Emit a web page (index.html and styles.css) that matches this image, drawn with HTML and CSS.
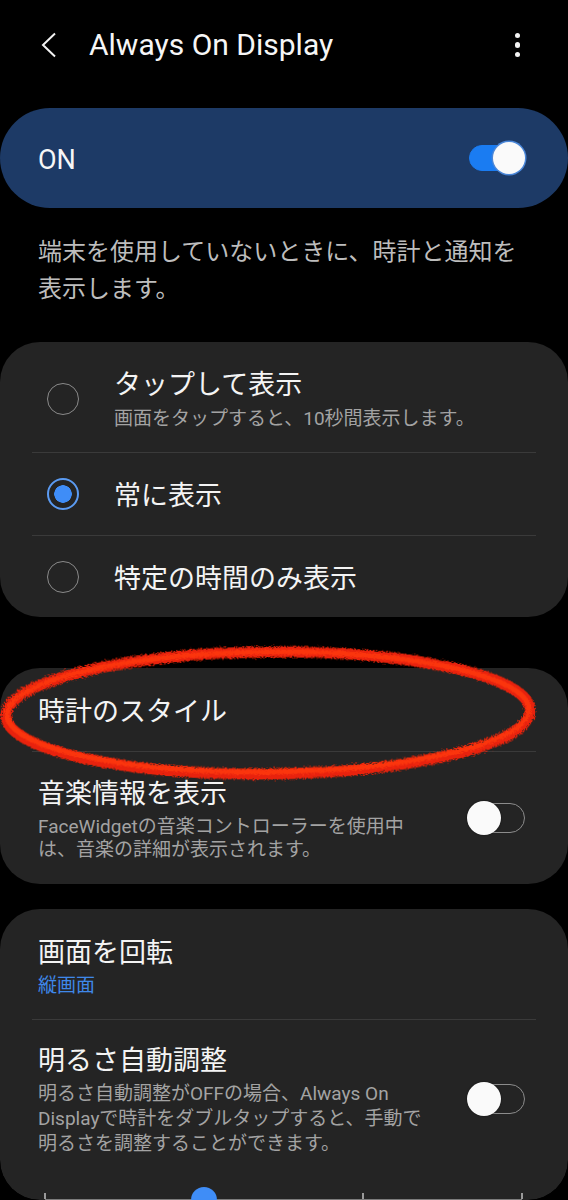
FILE: index.html
```html
<!DOCTYPE html>
<html>
<head>
  <meta charset="utf-8">
  <title>Always On Display</title>
  <link rel="stylesheet" href="styles.css">
</head>
<body>
  <div class="screen">
    <header class="appbar">
      <svg class="back" width="16" height="26" viewBox="0 0 16 26">
        <polyline points="14,1.5 2,13 14,24.5" fill="none" stroke="#f2f2f2" stroke-width="2"/>
      </svg>
      <h1 class="title">Always On Display</h1>
      <div class="more"><span></span><span></span><span></span></div>
    </header>

    <div class="master">
      <span class="master-label">ON</span>
      <span class="switch on"><span class="knob"></span></span>
    </div>

    <p class="intro">端末を使用していないときに、時計と通知を表示します。</p>

    <section class="card">
      <div class="option first">
        <span class="radio"></span>
        <div class="text">
          <div class="label">タップして表示</div>
          <div class="summary">画面をタップすると、10秒間表示します。</div>
        </div>
      </div>
      <div class="divider"></div>
      <div class="option">
        <span class="radio checked"></span>
        <div class="label">常に表示</div>
      </div>
      <div class="divider"></div>
      <div class="option last">
        <span class="radio"></span>
        <div class="label">特定の時間のみ表示</div>
      </div>
    </section>

    <section class="card second">
      <div class="row plain">
        <div class="label">時計のスタイル</div>
      </div>
      <div class="divider"></div>
      <div class="row music">
        <div class="text">
          <div class="label">音楽情報を表示</div>
          <div class="summary tight">FaceWidgetの音楽コントローラーを使用中<br>は、音楽の詳細が表示されます。</div>
        </div>
        <span class="switch"><span class="knob"></span></span>
      </div>
    </section>

    <section class="card third">
      <div class="row rotate">
        <div class="text">
          <div class="label">画面を回転</div>
          <div class="value">縦画面</div>
        </div>
      </div>
      <div class="divider"></div>
      <div class="row bright">
        <div class="text">
          <div class="label">明るさ自動調整</div>
          <div class="summary loose">明るさ自動調整がOFFの場合、Always On<br>Displayで時計をダブルタップすると、手動で<br>明るさを調整することができます。</div>
        </div>
        <span class="switch"><span class="knob"></span></span>
      </div>
      <div class="slider">
        <span class="tick t0"></span>
        <span class="tick t1"></span>
        <span class="tick t2"></span>
        <span class="tick t3"></span>
        <span class="thumb"></span>
      </div>
    </section>

    <!-- hand drawn red mark over the clock style row -->
    <svg class="mark" width="568" height="150" viewBox="0 0 568 150">
      <defs>
        <filter id="rough" x="-5%" y="-20%" width="110%" height="140%">
          <feTurbulence type="fractalNoise" baseFrequency="0.9" numOctaves="2" seed="3" result="noise"/>
          <feDisplacementMap in="SourceGraphic" in2="noise" scale="6"/>
        </filter>
      </defs>
      <g filter="url(#rough)" fill="none" transform="rotate(-0.6 268 73)">
        <ellipse cx="268" cy="73" rx="262" ry="61" stroke="#e82208" stroke-width="11"/>
        <ellipse cx="268" cy="72" rx="261" ry="60" stroke="#ff3a12" stroke-width="5" opacity="0.8"/>
      </g>
    </svg>
  </div>
</body>
</html>
```

FILE: styles.css
```css
body {
  margin: 0;
  background-color: #000;
  font-family: Roboto, "Noto Sans CJK JP", sans-serif;
  color: #f4f4f4;
}

.screen {
  position: relative;
  width: 568px;
  height: 1200px;
  overflow: hidden;
  border-radius: 0 0 40px 40px;
}

/* top bar */
.appbar {
  height: 90px;
  display: flex;
  align-items: center;
  padding-left: 41px;
}

.appbar .back {
  display: block;
}

.appbar .title {
  margin: 0 0 0 32px;
  font-size: 30px;
  font-weight: 400;
  line-height: 36px;
  color: #f6f6f6;
}

.appbar .more {
  margin-left: auto;
  margin-right: 48px;
  display: flex;
  flex-direction: column;
  gap: 4px;
}

.appbar .more span {
  width: 5.5px;
  height: 5.5px;
  border-radius: 50%;
  background-color: #f2f2f2;
}

/* master switch */
.master {
  margin-top: 18px;
  height: 100px;
  border-radius: 50px;
  background-color: #1d3a66;
  display: flex;
  align-items: center;
  justify-content: space-between;
  padding: 0 43px 0 38px;
}

.master-label {
  font-size: 27px;
  line-height: 32px;
  padding-top: 4px;
  color: #f6f6f6;
}

.intro {
  margin: 26px 0 0;
  padding: 0 38px;
  font-size: 24px;
  line-height: 37px;
  color: #bdbdbd;
}

/* switches */
.switch {
  position: relative;
  flex: none;
  width: 56px;
  height: 30px;
  box-sizing: border-box;
  border: 1.5px solid #8c8c8c;
  border-radius: 15px;
}

.switch .knob {
  position: absolute;
  top: 50%;
  left: -3px;
  width: 34px;
  height: 34px;
  margin-top: -17px;
  border-radius: 50%;
  background-color: #fafafa;
  box-shadow: 0 0 2px rgba(0, 0, 0, 0.6);
}

.switch.on {
  height: 26px;
  border-color: #1a7cf2;
  background-color: #1a7cf2;
}

.switch.on .knob {
  left: auto;
  right: -1px;
  width: 32px;
  height: 32px;
  margin-top: -16px;
  box-shadow: 0 0 0 1.5px #4a86d8;
}

/* cards */
.card {
  margin-top: 34px;
  background-color: #242424;
  border-radius: 40px;
}

.card.second {
  margin-top: 51px;
}

.card.third {
  margin-top: 25px;
}

.divider {
  height: 1px;
  margin: 0 32px 0 32px;
  background-color: #3a3a3a;
}

.label {
  font-size: 27px;
  line-height: 32px;
  padding-top: 4px;
  color: #f4f4f4;
}

.summary {
  margin-top: 4px;
  font-size: 19px;
  line-height: 28px;
  color: #a3a3a3;
}

.summary.tight {
  margin-top: 5px;
  line-height: 23px;
}

.summary.loose {
  margin-top: 4px;
  line-height: 25px;
}

.value {
  margin-top: 3px;
  font-size: 19px;
  line-height: 28px;
  color: #3f88ea;
}

.text {
  flex: 1;
  min-width: 0;
}

/* radio list */
.option {
  display: flex;
  align-items: center;
  height: 82px;
  padding-left: 47px;
}

.option.first {
  height: auto;
  padding-top: 23px;
  padding-bottom: 19px;
}

.option.last {
  height: 81px;
}

.radio {
  flex: none;
  width: 32px;
  height: 32px;
  box-sizing: border-box;
  margin-right: 35px;
  border: 1.5px solid #8a8a8a;
  border-radius: 50%;
}

.radio.checked {
  border: 2px solid #5b9bf2;
  background: radial-gradient(circle, #3f8df7 0 8.5px, transparent 9px);
}

/* setting rows */
.row {
  display: flex;
  align-items: center;
  padding: 0 43px 0 38px;
}

.row.plain {
  height: 83px;
}

.row.music {
  padding-top: 22px;
  padding-bottom: 23px;
}

.row.rotate {
  padding-top: 24px;
  padding-bottom: 19px;
}

.row.bright {
  padding-top: 21px;
}

.row .switch {
  margin-left: 20px;
}

/* brightness slider */
.slider {
  position: relative;
  height: 12px;
  margin: 31px 46px 0 45px;
  border-bottom: 1px solid #7c7c7c;
}

.slider .tick {
  position: absolute;
  bottom: 0;
  width: 2px;
  height: 6px;
  margin-left: -1px;
  background-color: #9a9a9a;
}

.slider .t0 { left: 0; }
.slider .t1 { left: 33.33%; }
.slider .t2 { left: 66.67%; }
.slider .t3 { left: 100%; }

.slider .thumb {
  position: absolute;
  top: 0;
  left: 33.33%;
  width: 26px;
  height: 26px;
  margin-left: -13px;
  border-radius: 50%;
  background-color: #3f8df7;
}

/* annotation */
.mark {
  position: absolute;
  left: 0;
  top: 640px;
  pointer-events: none;
}
```
